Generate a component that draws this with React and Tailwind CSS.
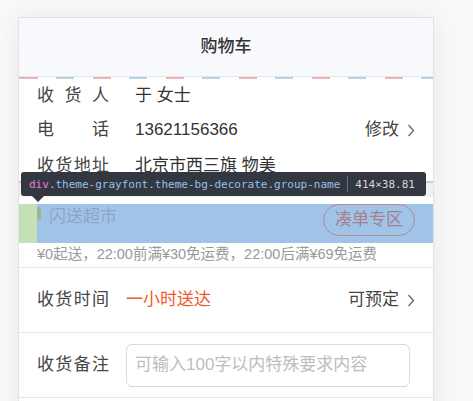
import React from "react";

const stripe =
  "h-[2px] bg-[repeating-linear-gradient(90deg,#ebb3ba_0px,#ebb3ba_18px,transparent_18px,transparent_36.5px,#b5d4ec_36.5px,#b5d4ec_54.5px,transparent_54.5px,transparent_73px)] bg-[position:1px_0]";

function Chevron() {
  return (
    <svg width="8" height="13" viewBox="0 0 8 13" className="ml-[8px]">
      <polyline points="1.5,1 6.5,6.5 1.5,12" fill="none" stroke="#666" strokeWidth="1.3" />
    </svg>
  );
}

function Label({ children }) {
  return (
    <span className="w-[72px] shrink-0 [text-align-last:justify] whitespace-nowrap text-[#444]">
      {children}
    </span>
  );
}

function Inspector() {
  return (
    <div className="absolute left-[2px] top-[154px] w-[405px] h-[24px] rounded-[3px] bg-[#333740] flex items-center pl-[8px] font-['DejaVu_Sans_Mono',monospace] text-[11px] leading-none">
      <span className="text-[#ee78e6]">div</span>
      <span className="text-[#93c1ea]">.theme-grayfont.theme-bg-decorate.group-name</span>
      <span className="mx-[7px] h-[16px] w-px bg-[#6b6f78]" />
      <span className="text-[#d6d6d6]">414×38.81</span>
      <span className="absolute left-[11px] top-[24px] w-0 h-0 border-l-[6px] border-r-[6px] border-t-[6px] border-l-transparent border-r-transparent border-t-[#333740]" />
    </div>
  );
}

export default function App() {
  return (
    <div className="min-h-screen bg-[#f9f9f9] pl-[18px] pt-[17px] font-['Liberation_Sans','Noto_Sans_CJK_SC',sans-serif] text-[17px] text-[#333]">
      <div className="relative w-[416px] bg-white border border-[#e2e2e2] shadow-[0_0_28px_rgba(0,0,0,0.07)]">
        <div className="h-[59px] bg-[#f8f9fd] border-b border-[#e3e3e3] flex items-center justify-center">
          <span className="font-medium text-[17px] text-[#333]">购物车</span>
        </div>
        <div className={stripe} />

        {/* address */}
        <div className="px-[18px]">
          <div className="h-[34px] flex items-center">
            <Label>收货人</Label>
            <span className="ml-[26px]">于 女士</span>
          </div>
          <div className="h-[34px] flex items-center">
            <Label>电话</Label>
            <span className="ml-[26px]">13621156366</span>
            <span className="ml-auto flex items-center text-[#444]">
              修改
              <Chevron />
            </span>
          </div>
          <div className="h-[34px] pt-[3px] flex items-center">
            <Label>收货地址</Label>
            <span className="ml-[26px]">北京市西三旗 物美</span>
          </div>
        </div>
        <div className={stripe} />
        <div className="h-[14px] bg-[#efefef]" />

        {/* group */}
        <div className="pt-[7px]">
          <div className="h-[39px] border-l-[18px] border-[#c5dfb6] bg-[#9fc4e8] flex items-start pr-[18px]">
            <span className="mt-[3px] w-[4px] h-[13px] rounded-[2px] bg-[#9bb593]" />
            <span className="ml-[8px] leading-[26px] text-[#8ea5c2]">闪送超市</span>
            <button className="ml-auto h-[32px] px-[11px] rounded-full border border-[#bb8894] text-[#a97d8b] text-[17px]">
              凑单专区
            </button>
          </div>
          <div className="h-[25px] px-[18px] border-b border-[#e5e5e5] text-[14.5px] leading-[22px] text-[#999]">
            ¥0起送，22:00前满¥30免运费，22:00后满¥69免运费
          </div>
        </div>

        {/* time */}
        <div className="h-[65px] px-[18px] flex items-center border-b border-[#e5e5e5]">
          <Label>收货时间</Label>
          <span className="ml-[17px] text-[#f2582b]">一小时送达</span>
          <span className="ml-auto flex items-center text-[#444]">
            可预定
            <Chevron />
          </span>
        </div>

        {/* remark */}
        <div className="h-[65px] px-[18px] flex items-center border-b border-[#e5e5e5]">
          <Label>收货备注</Label>
          <input
            className="ml-[17px] w-[284px] h-[43px] rounded-[6px] border border-[#d9d9d9] px-[8px] text-[17px] outline-none placeholder:text-[#bdbdbd]"
            placeholder="可输入100字以内特殊要求内容"
          />
        </div>
        <div className="h-[40px]" />

        <Inspector />
      </div>
    </div>
  );
}
